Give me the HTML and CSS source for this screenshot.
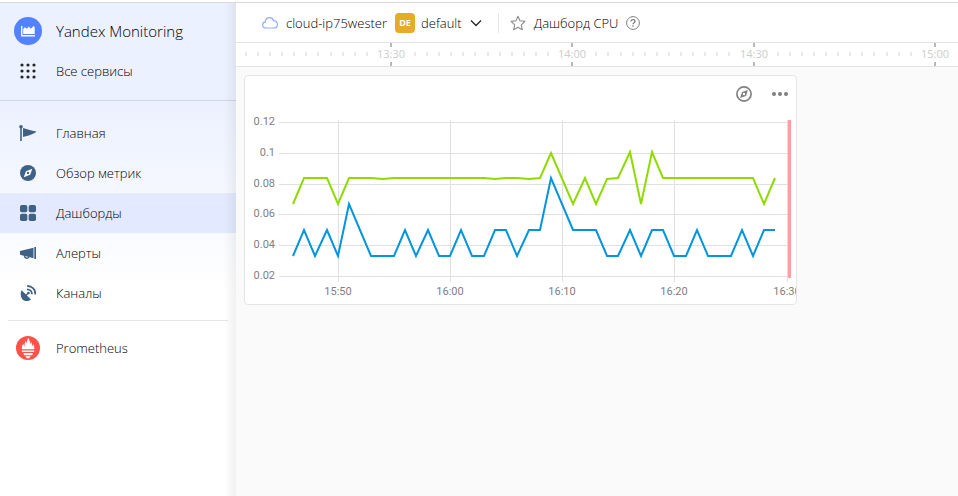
FILE: index.html
```html
<!DOCTYPE html>
<html lang="ru">
<head>
<meta charset="utf-8">
<title>Yandex Monitoring</title>
<meta name="viewport" content="width=device-width, initial-scale=1">
<link rel="stylesheet" href="styles.css">
</head>
<body>
<div class="app">
  <aside class="sidebar">
    <div class="sidebar-head">
      <a class="brand" href="#">
        <span class="nav-icon"><svg width="28" height="28" viewBox="0 0 28 28"><circle cx="14" cy="14" r="14" fill="#5282ff"/><path d="M7.700 9v9.800h13.300" fill="none" stroke="#fff" stroke-width="1.400"/><path d="M9.200 17v-5l1.700-1.800 1.900 1.600 2-2.200 1.900 2.200 1.400-1.200 1.300-1.500 1.300 1V17z" fill="#fff"/></svg></span>
        Yandex Monitoring
      </a>
      <a class="nav-item" href="#">
        <span class="nav-icon"><svg width="16" height="16" viewBox="0 0 16 16" fill="#262626"><circle cx="2" cy="2" r="1.600"/><circle cx="8" cy="2" r="1.600"/><circle cx="14" cy="2" r="1.600"/><circle cx="2" cy="8" r="1.600"/><circle cx="8" cy="8" r="1.600"/><circle cx="14" cy="8" r="1.600"/><circle cx="2" cy="14" r="1.600"/><circle cx="8" cy="14" r="1.600"/><circle cx="14" cy="14" r="1.600"/></svg></span>
        Все сервисы
      </a>
    </div>
    <nav class="nav">
      <a class="nav-item" href="#">
        <span class="nav-icon"><svg width="18" height="16" viewBox="0 0 18 16" fill="#3f6284"><circle cx="2" cy="1.800" r="1.800"/><path d="M1.200 2h1.600v14H1.200zM4 3c3 1 8 2.500 13.500 3.500C15 9 9 10.800 4 12z"/></svg></span>
        Главная
      </a>
      <a class="nav-item" href="#">
        <span class="nav-icon"><svg width="16" height="16" viewBox="0 0 16 16"><circle cx="8" cy="8" r="8" fill="#3f6284"/><path d="M12.300 3.700 10.200 9.800 3.700 12.300 6 6.200z" fill="#fff"/><circle cx="8" cy="8" r="1.200" fill="#3f6284"/></svg></span>
        Обзор метрик
      </a>
      <a class="nav-item nav-item-active" href="#" aria-current="page">
        <span class="nav-icon"><svg width="16" height="16" viewBox="0 0 16 16" fill="#3f6284"><rect width="7.300" height="7.300" rx="1.800"/><rect x="8.700" width="7.300" height="7.300" rx="1.800"/><rect y="8.700" width="7.300" height="7.300" rx="1.800"/><rect x="8.700" y="8.700" width="7.300" height="7.300" rx="1.800"/></svg></span>
        Дашборды
      </a>
      <a class="nav-item" href="#">
        <span class="nav-icon"><svg width="16" height="16" viewBox="0 0 16 16" fill="#3f6284"><path d="M0 6 13.500 2.800v10.400L0 9.800zM14.300 2H16v12h-1.700z"/><path d="M4.500 10v1.300c0 2.200 4 2.700 4.200.4" fill="none" stroke="#3f6284" stroke-width="1.400"/></svg></span>
        Алерты
      </a>
      <a class="nav-item" href="#">
        <span class="nav-icon"><svg width="16" height="16" viewBox="0 0 16 16"><path d="M1.700 5.300 11 14.600C7.500 17.200 3.500 16.200 1.800 13.500.6 11 0 7.500 1.700 5.300z" fill="#3f6284"/><path d="M5.500 10.500 8.500 8" stroke="#3f6284" stroke-width="1.600"/><circle cx="8.500" cy="8" r="1.300" fill="#3f6284"/><path d="M7 4.300c2.800 0 5 2.200 5 5M7.200 1c5 0 8.200 3.500 8.200 8.500" fill="none" stroke="#3f6284" stroke-width="1.800"/></svg></span>
        Каналы
      </a>
    </nav>
    <hr class="divider">
    <a class="nav-item" href="#">
      <span class="nav-icon"><svg width="24" height="24" viewBox="0 0 24 24"><circle cx="12" cy="12" r="12" fill="#ff514c"/><path d="M6 13.300C5.700 11.500 6 10 7.200 7.600c.2 1.400.8 2.300 1.400 2.900C8.200 8.300 9.200 5.800 9.900 4.500c.2 1.100.4 2.300.8 3.100.1-2.200.6-4.100 1.500-5.900 1.200 2.200 2 4.200 2 6.500.7-.9.800-1.700.7-2.700 1.100 1.500 1.400 3.400 1 5 .7-.6 1-1.400 1.300-2.400 1 1.900 1.400 3.500 1 5.200zM6 14.500h12.200v1.500H6zM7.500 17h9.300l-.5 2.200H8zM9.500 20.200h5c-.7 1.400-1.500 2-2.500 2s-1.900-.6-2.500-2z" fill="#fff"/></svg></span>
      Prometheus
    </a>
  </aside>

  <main class="main">
    <header class="topbar">
      <button class="folder" type="button">
        <svg width="16" height="16" viewBox="0 0 16 16"><path d="M4.200 13C2 13 .6 11.700.6 9.900c0-1.700 1.200-2.800 2.700-3C3.500 4.300 5.300 2.700 7.500 2.700c2 0 3.500 1.100 4.100 3 2.300.2 3.800 1.700 3.800 3.700S13.900 13 11.800 13z" fill="none" stroke="#8fadff" stroke-width="1.200"/></svg>
        <span>cloud-ip75wester</span>
        <span class="badge">DE</span>
        <span class="folder-name">default</span>
        <svg width="12" height="12" viewBox="0 0 12 12"><path d="m1 3.500 5 5 5-5" fill="none" stroke="#262626" stroke-width="1.300"/></svg>
      </button>
      <div class="title">
        <button class="icon-button" type="button" aria-label="Избранное"><svg width="16" height="16" viewBox="0 0 16 16"><path d="m8 1.300 2 4.500 4.900.6-3.600 3.400 1 4.900L8 12.300l-4.300 2.400 1-4.900L1.100 6.400 6 5.800z" fill="none" stroke="#8c8c8c" stroke-width="1.100" stroke-linejoin="round"/></svg></button>
        <h1>Дашборд CPU</h1>
        <button class="icon-button" type="button" aria-label="Справка"><svg width="14" height="14" viewBox="0 0 14 14" fill="none" stroke="#808080"><circle cx="7" cy="7" r="6.400"/><path d="M5 5.600C5 4.300 5.900 3.700 7 3.700s2 .7 2 1.700c0 1.300-2 1.400-2 2.800M7 9.300v1.400" stroke-width="1.300"/></svg></button>
      </div>
    </header>

    <svg class="ruler" viewBox="236 43 722 23" preserveAspectRatio="xMinYMid slice" role="img" aria-label="Шкала времени">
      <path class="tick" d="M246 52v4M258 52v4M270 52v4M282 52v4M294 52v4M306 52v4M318 52v4M331 52v4M343 52v4M355 52v4M367 52v4M415 52v4M427 52v4M439 52v4M451 52v4M463 52v4M475 52v4M488 52v4M500 52v4M512 52v4M524 52v4M536 52v4M548 52v4M596 52v4M608 52v4M621 52v4M633 52v4M645 52v4M657 52v4M669 52v4M681 52v4M693 52v4M705 52v4M717 52v4M729 52v4M778 52v4M790 52v4M802 52v4M814 52v4M826 52v4M838 52v4M850 52v4M862 52v4M874 52v4M887 52v4M899 52v4M911 52v4"/>
      <path class="tick-major" d="M391 43v4M391 62v4M572 43v4M572 62v4M754 43v4M754 62v4M935 43v4M935 62v4"/>
      <text x="391" y="58">13:30</text><text x="572" y="58">14:00</text><text x="754" y="58">14:30</text><text x="935" y="58">15:00</text>
    </svg>

    <div class="dashboard">
      <section class="card">
        <div class="card-tools">
          <button class="icon-button" type="button" aria-label="Открыть в обзоре метрик"><svg width="16" height="16" viewBox="0 0 16 16"><circle cx="8" cy="8" r="7.100" fill="none" stroke="#808080" stroke-width="1.700"/><path d="M11.900 4.100 10 10l-5.900 1.900L6 6z" fill="#808080"/><circle cx="8" cy="8" r="1.200" fill="#fff"/></svg></button>
          <button class="icon-button" type="button" aria-label="Меню"><svg width="16" height="16" viewBox="0 0 16 16" fill="#808080"><circle cx="2" cy="8" r="2"/><circle cx="8" cy="8" r="2"/><circle cx="14" cy="8" r="2"/></svg></button>
        </div>
        <svg class="chart" viewBox="245 110 551 194" role="img" aria-label="График CPU">
          <path class="grid" d="M279 122.500H788M279 153.500H788M279 184.500H788M279 214.500H788M279 245.500H788M279 276.500H788M338.500 120V282M450.500 120V282M562.500 120V282M674.500 120V282M787.500 120V282"/>
          <path class="now" d="M789.500 120V278"/>
          <polyline class="line-green" points="293,204 304,178 327,178 338,204 349,178 371,178 383,179 394,178 484,178 495,179 506,178 517,178 529,179 540,178 551,153 573,204 585,178 596,204 607,179 618,178 630,152 641,204 652,152 663,178 753,178 764,204 775,178"/>
          <polyline class="line-blue" points="293,256 304,230 315,256 327,230 338,256 349,204 371,256 394,256 405,230 416,256 428,230 439,256 450,256 461,230 472,256 484,256 495,230 506,230 517,256 529,230 540,230 551,178 573,230 596,230 607,256 618,256 630,230 641,256 652,230 663,230 674,256 686,256 697,230 708,256 731,256 742,230 753,256 764,230 775,230"/>
          <g class="y-labels"><text x="275" y="125">0.12</text><text x="275" y="156">0.1</text><text x="275" y="187">0.08</text><text x="275" y="217">0.06</text><text x="275" y="248">0.04</text><text x="275" y="279">0.02</text></g>
          <g class="x-labels"><text x="338" y="295">15:50</text><text x="450" y="295">16:00</text><text x="562" y="295">16:10</text><text x="674" y="295">16:20</text><text x="787" y="295">16:30</text></g>
        </svg>
      </section>
    </div>
  </main>
</div>
</body>
</html>
```
FILE: styles.css
```css
* {
  box-sizing: border-box;
}

body {
  margin: 0;
  font: 300 13px/20px "Open Sans", "Noto Sans", sans-serif;
  color: #000;
  background: #fff;
}

svg {
  display: block;
  flex: none;
}

button {
  padding: 0;
  border: 0;
  background: none;
  font: inherit;
  color: inherit;
  cursor: pointer;
}

.app {
  display: flex;
  min-height: calc(100vh - 2px);
  margin-top: 2px;
  border-top: 1px solid #d9d9d9;
}

.sidebar {
  position: relative;
  flex: 0 0 236px;
  background: linear-gradient(#ecf1ff, #ecf1ff 98px, #fff 290px);
}

/* soft shade along the right edge */
.sidebar::after {
  content: "";
  position: absolute;
  inset: 0 0 0 auto;
  width: 12px;
  background: linear-gradient(90deg, transparent, rgba(0, 0, 0, 0.06));
  pointer-events: none;
}

.sidebar-head {
  padding: 8px 0 9px;
  border-bottom: 1px solid #d0d7e6;
}

.brand,
.nav-item {
  display: flex;
  align-items: center;
  gap: 12px;
  height: 40px;
  padding-left: 12px;
  color: inherit;
  text-decoration: none;
}

.brand {
  font-size: 15px;
}

.nav-icon {
  display: flex;
  justify-content: center;
  width: 32px;
}

.nav {
  padding-top: 12px;
}

.nav-item-active {
  background: #e3eaff;
}

.divider {
  height: 1px;
  margin: 7px 8px;
  border: 0;
  background: #e5e5e5;
}

.main {
  flex: 1;
  min-width: 0;
  background: #fafafa;
}

.topbar {
  display: flex;
  align-items: center;
  height: 40px;
  padding-left: 26px;
  border-bottom: 1px solid #e5e5e5;
  background: #fff;
}

.folder,
.title {
  display: flex;
  align-items: center;
  gap: 8px;
}

.folder {
  padding-right: 16px;
}

.badge {
  width: 20px;
  border-radius: 4px;
  background: #e6ab2b;
  color: #fff;
  font-size: 9px;
  font-weight: 700;
  text-align: center;
}

.folder-name {
  margin-left: -2px;
}

.title {
  height: 20px;
  padding-left: 11px;
  border-left: 1px solid #e5e5e5;
}

.title h1 {
  margin: 0;
  font-size: 13px;
  font-weight: inherit;
}

.ruler {
  width: 100%;
  height: 24px;
  border-bottom: 1px solid #e5e5e5;
  background: #fff;
}

.ruler text {
  font-size: 11px;
  font-weight: 400;
  text-anchor: middle;
  fill: #ccc;
}

.tick {
  stroke: #e8e8e8;
  stroke-width: 2;
}

.tick-major {
  stroke: #b8b8b8;
  stroke-width: 2;
}

.dashboard {
  padding: 8px;
}

.card {
  max-width: 553px;
  border: 1px solid #e5e5e5;
  border-radius: 4px;
  background: #fff;
  overflow: hidden;
}

.card-tools {
  display: flex;
  align-items: center;
  justify-content: flex-end;
  gap: 20px;
  height: 34px;
  padding: 2px 8px 0;
}

.chart {
  width: 100%;
  font-family: Roboto, sans-serif;
  font-size: 11px;
  font-weight: 400;
}

.grid {
  fill: none;
  stroke: #e0e0e0;
}

.now {
  stroke: #ff9e9e;
  stroke-width: 3;
}

.line-green,
.line-blue {
  fill: none;
  stroke-width: 2;
}

.line-green {
  stroke: #8fdb00;
}

.line-blue {
  stroke: #0095de;
}

.y-labels,
.x-labels {
  fill: #808080;
}

.y-labels {
  text-anchor: end;
}

.x-labels {
  text-anchor: middle;
}
```
